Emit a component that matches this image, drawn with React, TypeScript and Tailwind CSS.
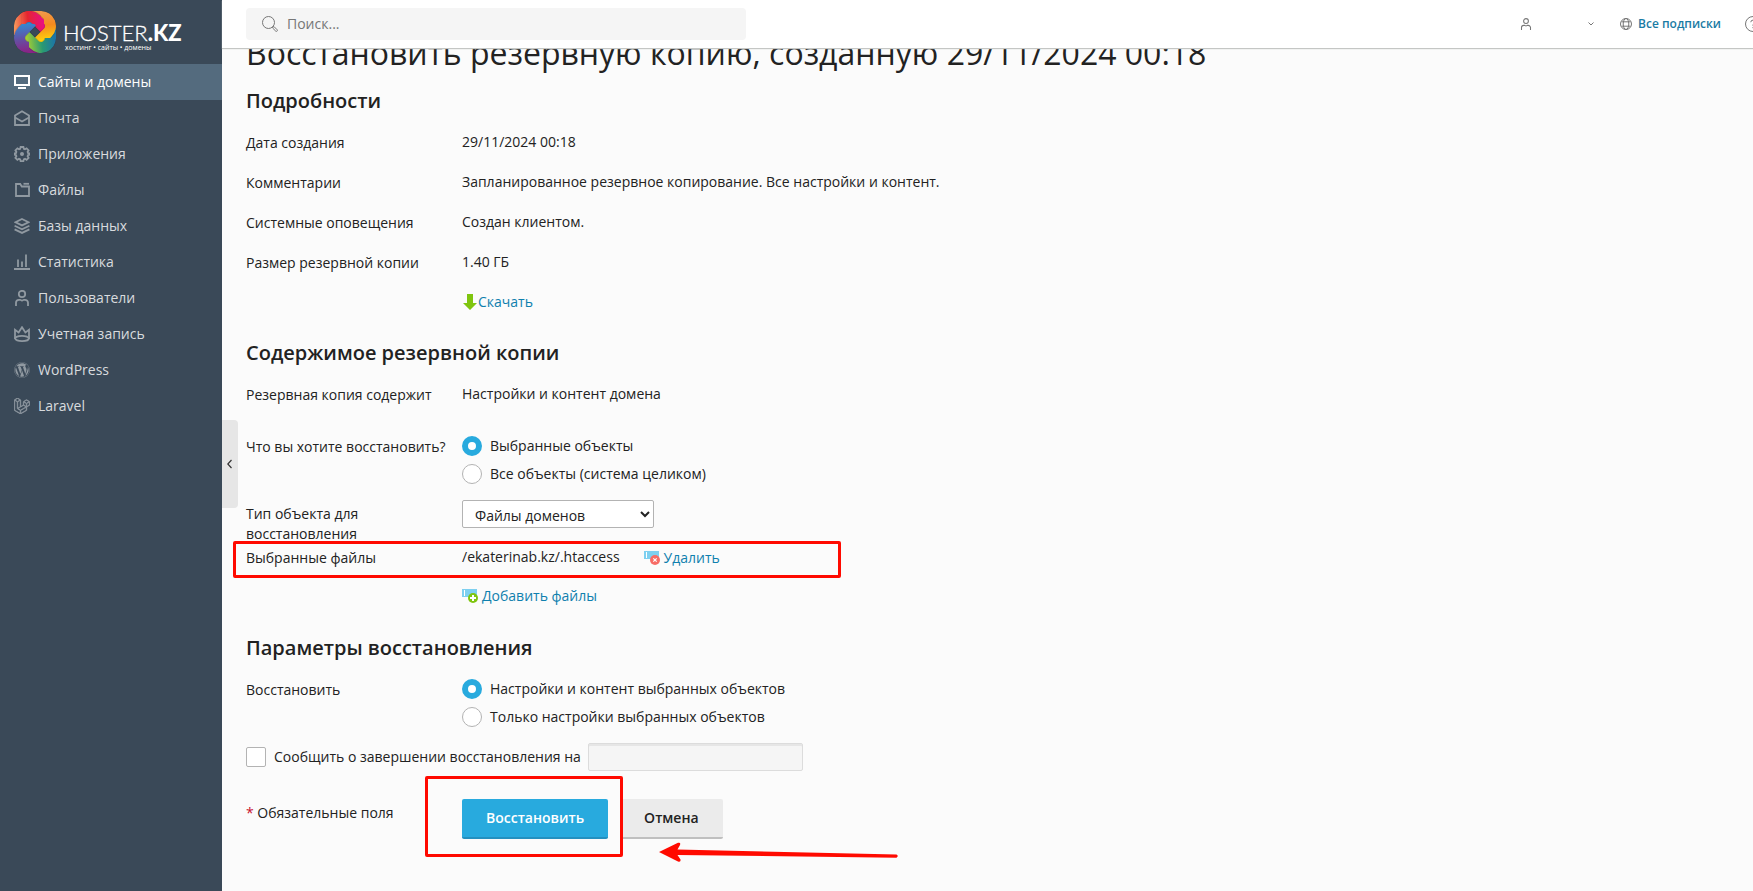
import React from 'react';
import { FaWordpress } from 'react-icons/fa';
import { SiLaravel } from 'react-icons/si';

const strokeProps = {
  viewBox: '0 0 16 16',
  fill: 'none',
  stroke: 'currentColor',
  strokeWidth: 1.8,
  className: 'w-4 h-4',
};

const MonitorIcon = () => (
  <svg {...strokeProps} strokeWidth={2}>
    <path d="M1 2h14v9H1z" />
    <path d="M4 14h8" />
  </svg>
);

const MailIcon = () => (
  <svg {...strokeProps}>
    <path d="M1 5.500 8 1.200l7 4.300V15H1z" />
    <path d="M1 7.500 8 11.500l7-4" />
  </svg>
);

const GearIcon = () => (
  <svg {...strokeProps}>
    <path d="M6.600 1h2.800l.4 1.800 1.200.5 1.600-1 2 2-1 1.600.5 1.200 1.100.2v1.500l-1.100.2-.5 1.200 1 1.600-2 2-1.600-1-1.200.5-.4 1.800H6.600l-.4-1.800-1.200-.5-1.600 1-2-2 1-1.600-.5-1.200-1.100-.2V7.300l1.100-.2.5-1.200-1-1.600 2-2 1.600 1 1.200-.5z" />
    <circle cx="8" cy="8" r="2" fill="currentColor" stroke="none" />
  </svg>
);

const FolderIcon = () => (
  <svg {...strokeProps}>
    <path d="M2 2h4.200l1.600 2.500H15V14H2z" />
    <path d="M9.500 1.800H15" />
  </svg>
);

const LayersIcon = () => (
  <svg {...strokeProps}>
    <path d="M8 1 14.500 4.200 8 7.400 1.500 4.200z" />
    <path d="m.6 7.800 7.400 3.500 7.400-3.500" />
    <path d="m.6 11.400 7.400 3.500 7.400-3.500" />
  </svg>
);

const StatsIcon = () => (
  <svg {...strokeProps}>
    <path d="M0 15h16M4 5.500V13M8 7.500V13M12 .5V13" />
  </svg>
);

const UserIcon = ({ className = 'w-4 h-4', strokeWidth = 1.8 }: { className?: string; strokeWidth?: number }) => (
  <svg {...strokeProps} strokeWidth={strokeWidth} className={className}>
    <circle cx="8" cy="4" r="3.200" />
    <path d="M2 16v-3.200a3 3 0 0 1 3-3h1.200c.8 0 .8.8 1.800.8s1-.8 1.800-.8H11a3 3 0 0 1 3 3V16" />
  </svg>
);

const CrownIcon = () => (
  <svg {...strokeProps}>
    <path d="M1 13V3.800l3.600 2.600L8 1.200l3.400 5.200L15 3.800V13" />
    <ellipse cx="8" cy="12.500" rx="6.800" ry="2.600" />
  </svg>
);

const navItems = [
  { label: 'Сайты и домены', icon: <MonitorIcon />, active: true },
  { label: 'Почта', icon: <MailIcon /> },
  { label: 'Приложения', icon: <GearIcon /> },
  { label: 'Файлы', icon: <FolderIcon /> },
  { label: 'Базы данных', icon: <LayersIcon /> },
  { label: 'Статистика', icon: <StatsIcon /> },
  { label: 'Пользователи', icon: <UserIcon /> },
  { label: 'Учетная запись', icon: <CrownIcon /> },
  { label: 'WordPress', icon: <FaWordpress className="w-4 h-4" /> },
  { label: 'Laravel', icon: <SiLaravel className="w-4 h-4" stroke="currentColor" strokeWidth={1} /> },
];

const details = [
  { label: 'Дата создания', value: '29/11/2024 00:18' },
  { label: 'Комментарии', value: 'Запланированное резервное копирование. Все настройки и контент.' },
  { label: 'Системные оповещения', value: 'Создан клиентом.' },
  { label: 'Размер резервной копии', value: '1.40 ГБ' },
];

// four ribbons of the knot, each one a quarter turn from the one before
const ribbons = [
  { id: 'red', turn: 'rotate(0 21 21)', colors: ['#f7935a', '#e5262f', '#ea0b8c'] },
  { id: 'orange', turn: 'rotate(90 21 21)', colors: ['#f2994a', '#f58a1f', '#ffd80a'] },
  { id: 'green', turn: 'rotate(180 21 21)', colors: ['#1c74a8', '#299a72', '#b4d52c'] },
  { id: 'blue', turn: 'rotate(270 21 21)', colors: ['#8a2386', '#6450a4', '#2e8fd6'] },
];

function Logo() {
  const band = 'M5.500 15A9.500 9.500 0 0 1 21.700 8.300L31.500 18.100';
  return (
    <a href="#home" className="flex h-16 items-center gap-2 pl-[14px]">
      <svg viewBox="0 0 42 42" className="h-[42px] w-[42px] shrink-0" fill="none" strokeWidth="11">
        <defs>
          {ribbons.map((r) => (
            <linearGradient key={r.id} id={r.id} gradientUnits="userSpaceOnUse" x1="2" y1="22" x2="32" y2="18">
              <stop offset="0" stopColor={r.colors[0]} />
              <stop offset=".45" stopColor={r.colors[1]} />
              <stop offset="1" stopColor={r.colors[2]} />
            </linearGradient>
          ))}
          <clipPath id="joint">
            <path d="M7.500 0H30V13H7.500z" />
          </clipPath>
          <clipPath id="outline">
            <rect width="42" height="42" rx="14" />
          </clipPath>
        </defs>
        <g clipPath="url(#outline)">
          {ribbons.map((r) => (
            <path key={r.id} d="M5.500 24V14.500" transform={r.turn} stroke={`url(#${r.id})`} />
          ))}
          {ribbons.map((r) => (
            <g key={r.id} transform={r.turn}>
              <path d={band} stroke="#00000020" strokeWidth="12.500" />
              <path d={band} stroke={`url(#${r.id})`} />
            </g>
          ))}
          <g clipPath="url(#joint)">
            <path d={band} stroke="#00000020" strokeWidth="12.500" />
            <path d={band} stroke="url(#red)" />
          </g>
        </g>
      </svg>
      <svg viewBox="0 0 120 42" className="h-[42px] w-[120px]" fill="#fff" fontFamily="Lato, sans-serif">
        <text x="-1" y="30" fontSize="22" fontWeight="300" stroke="#fff" strokeWidth=".3">
          HOSTER<tspan fontWeight="900" stroke="none">.KZ</tspan>
        </text>
        <text x="1" y="39" fontSize="7" fontFamily="'Open Sans', sans-serif">хостинг • сайты • домены</text>
      </svg>
    </a>
  );
}

function Sidebar() {
  return (
    <aside className="w-[222px] shrink-0 bg-[#3a4958]">
      <Logo />
      <nav>
        {navItems.map((item) => (
          <a
            key={item.label}
            href="#"
            className={
              item.active
                ? 'flex h-9 items-center gap-2 bg-[#546b7e] pl-[14px] text-white'
                : 'flex h-9 items-center gap-2 pl-[14px] text-[#d8dbde]'
            }
          >
            <span className={item.active ? 'text-white' : 'text-[#9099a1]'}>{item.icon}</span>
            {item.label}
          </a>
        ))}
      </nav>
    </aside>
  );
}

function Header() {
  return (
    <header className="relative z-10 flex h-12 items-center justify-between bg-white pl-6 shadow-[0_1px_1px_#c4c6c4]">
      <div className="relative w-[500px]">
        <svg viewBox="0 0 16 16" className="absolute left-4 top-2 h-4 w-4" fill="none" stroke="#777">
          <circle cx="6.500" cy="6.500" r="6" />
          <path d="m10.800 10.800 1.200-.2 3.200 3.200a1 1 0 0 1-1.400 1.400L10.600 12z" />
        </svg>
        <input
          type="text"
          aria-label="Поиск"
          placeholder="Поиск..."
          className="h-8 w-full rounded bg-[#f5f5f5] pb-px pl-[41px] placeholder:text-[#777]"
        />
      </div>
      <div className="flex items-center text-[#777]">
        <button aria-label="Профиль" className="flex items-center gap-14">
          <UserIcon className="h-3 w-3" strokeWidth={1.4} />
          <svg viewBox="0 0 6 4" className="h-1 w-[6px]" fill="none" stroke="currentColor">
            <path d="m.5.5 2.500 2.500L5.500.5" />
          </svg>
        </button>
        <a href="#subscriptions" className="ml-[26px] flex items-center gap-[6px] text-[12px] font-semibold text-[#1a7ba4]">
          <svg viewBox="0 0 12 12" className="h-3 w-3" fill="none" stroke="#777">
            <circle cx="6" cy="6" r="5.500" />
            <ellipse cx="6" cy="6" rx="2.800" ry="5.500" />
            <path d="M1.500 3.800h9M1.500 8.200h9" />
          </svg>
          Все подписки
        </a>
        <button aria-label="Помощь" className="-mr-2 ml-6">
          <svg viewBox="0 0 16 16" className="h-4 w-4" fill="none" stroke="currentColor">
            <circle cx="8" cy="8" r="7.500" />
            <path d="M5.800 6.200A2.200 2.200 0 1 1 8 8.500v1.300M8 11v1.200" />
          </svg>
        </button>
      </div>
    </header>
  );
}

function SectionTitle({ children }: { children: React.ReactNode }) {
  return <h2 className="mb-[19px] text-[20px] font-semibold leading-6">{children}</h2>;
}

function Row({ label, className = '', children }: { label?: React.ReactNode; className?: string; children: React.ReactNode }) {
  return (
    <div className={`grid grid-cols-[200px_1fr] gap-x-4 ${className}`}>
      <div className="pt-px">{label}</div>
      <div>{children}</div>
    </div>
  );
}

function Radio({ name, label, checked }: { name: string; label: string; checked?: boolean }) {
  return (
    <label className="flex items-center gap-2">
      <input
        type="radio"
        name={name}
        defaultChecked={checked}
        className="h-5 w-5 appearance-none rounded-full border border-[#b3b3b3] bg-white checked:border-[6px] checked:border-[#28aade]"
      />
      {label}
    </label>
  );
}

function FileIcon({ remove }: { remove?: boolean }) {
  return (
    <svg viewBox="0 0 16 16" className="h-4 w-4" fill="none">
      <path d="M0 1h15v8H0z" fill="#7ed0f0" />
      <path d="M2.500 2v6" stroke="#fff" />
      <circle cx="11" cy="10" r="5" fill={remove ? '#f76c66' : '#7fc50e'} />
      {remove ? (
        <path d="m9.300 8.300 3.400 3.400m0-3.400-3.400 3.400" stroke="#fff" strokeWidth="1.200" />
      ) : (
        <path d="M11 7v6M8 10h6" stroke="#fff" strokeWidth="2" />
      )}
    </svg>
  );
}

function Content() {
  return (
    <main className="px-6 text-[#222]">
      <h1 className="-mt-[15px] mb-4 text-[32px] leading-10">Восстановить резервную копию, созданную 29/11/2024 00:18</h1>

      <SectionTitle>Подробности</SectionTitle>
      <div className="mb-[29px] flex flex-col gap-5">
        {details.map((row) => (
          <Row key={row.label} label={row.label} className="h-5">
            {row.value}
          </Row>
        ))}
        <Row className="h-5">
          <a href="#download" className="flex items-center text-[#0f80ae]">
            <svg viewBox="0 0 16 16" className="h-4 w-4" fill="#7fc50e">
              <path d="M5 0h6v9h4l-7 7-7-7h4z" />
            </svg>
            Скачать
          </a>
        </Row>
      </div>

      <SectionTitle>Содержимое резервной копии</SectionTitle>
      <Row label="Резервная копия содержит" className="h-5">
        Настройки и контент домена
      </Row>
      <Row label="Что вы хотите восстановить?" className="mt-8">
        <div className="flex flex-col gap-2">
          <Radio name="scope" label="Выбранные объекты" checked />
          <Radio name="scope" label="Все объекты (система целиком)" />
        </div>
      </Row>
      <Row className="mt-4" label={<label htmlFor="objectType" className="block pt-[3px]">Тип объекта для восстановления</label>}>
        <select
          id="objectType"
          className="h-7 w-48 rounded-xs border border-[#b3b3b3] bg-white px-2 pt-[2px]"
        >
          <option>Файлы доменов</option>
        </select>
      </Row>
      <div className="relative mt-[3px]">
        <Row label="Выбранные файлы">
          <div className="flex items-start gap-6">
            /ekaterinab.kz/.htaccess
            <a href="#remove" className="flex items-center gap-1 pt-px text-[#0f80ae]">
              <FileIcon remove />
              Удалить
            </a>
          </div>
        </Row>
        <div className="pointer-events-none absolute -left-[13px] -top-[6px] h-[37px] w-[608px] rounded-xs border-[3px] border-[#ff0a00]" />
      </div>
      <Row className="mb-[30px] mt-[18px]">
        <a href="#add" className="flex items-center gap-1 text-[#0f80ae]">
          <FileIcon />
          Добавить файлы
        </a>
      </Row>

      <SectionTitle>Параметры восстановления</SectionTitle>
      <Row label="Восстановить">
        <div className="flex flex-col gap-2">
          <Radio name="mode" label="Настройки и контент выбранных объектов" checked />
          <Radio name="mode" label="Только настройки выбранных объектов" />
        </div>
      </Row>
      <div className="mt-4 flex items-center gap-[7px]">
        <label className="flex items-center gap-2">
          <input type="checkbox" className="h-5 w-5 appearance-none rounded-xs border border-[#b3b3b3] bg-white" />
          Сообщить о завершении восстановления на
        </label>
        <input
          type="email"
          disabled
          aria-label="Email"
          className="h-7 w-[215px] rounded-xs border border-[#dcdcdc] bg-[#f5f5f5] shadow-[inset_0_2px_0_#e6e6e6]"
        />
      </div>

      <div className="relative mt-7">
        <Row
          label={
            <div className="pt-[3px]">
              <span className="text-[#c8102e]">*</span> Обязательные поля
            </div>
          }
        >
          <div className="flex gap-3 font-semibold">
            <button className="h-10 rounded-xs border-b-2 border-[#2490bf] bg-[#28aade] px-6 text-white">Восстановить</button>
            <button className="h-10 rounded-xs border-b-2 border-[#bfbfbf] bg-[#ebebeb] px-6">Отмена</button>
          </div>
        </Row>
        <div className="pointer-events-none absolute -top-[23px] left-[179px] h-[81px] w-[198px] rounded-xs border-[3px] border-[#ff0a00]" />
        <svg viewBox="0 0 240 20" className="pointer-events-none absolute left-[413px] top-[43px] h-5 w-60" fill="#ff0a00">
          <path d="M0 10 19 .800Q22 0 21 3L18.500 7.500 237.500 12.500Q240 14 237.500 15.800L18.500 13 21.500 17.500Q22 20.500 19 19.500Z" />
        </svg>
      </div>
    </main>
  );
}

export default function App() {
  return (
    <div className="flex h-screen overflow-hidden bg-[#fbfbfb] font-['Open_Sans',sans-serif] text-[14px] leading-5">
      <Sidebar />
      <div className="relative min-w-0 flex-1">
        <Header />
        <Content />
        <button
          aria-label="Свернуть меню"
          className="absolute left-0 top-[420px] flex h-[88px] w-4 items-center justify-center rounded-r bg-[#e6e6e6]"
        >
          <svg viewBox="0 0 6 10" className="h-[10px] w-[6px]" fill="none" stroke="#333" strokeWidth="1.200">
            <path d="M4.500 1 .8 5l3.700 4" />
          </svg>
        </button>
      </div>
    </div>
  );
}
